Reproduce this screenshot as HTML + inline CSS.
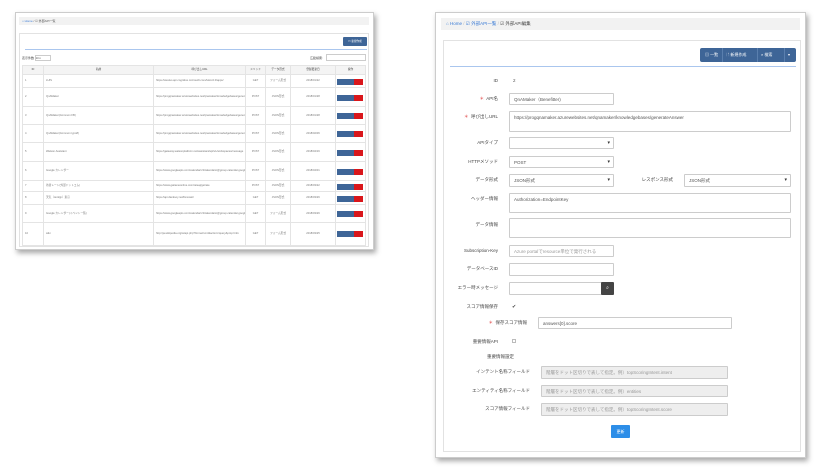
<!DOCTYPE html>
<html><head><meta charset="utf-8"><style>
*{box-sizing:border-box;margin:0;padding:0}
body{width:819px;height:474px;background:#fff;position:relative;overflow:hidden;font-family:"Liberation Sans","Noto Sans CJK JP",sans-serif;color:#555}
.a{position:absolute}
.panel{background:#fff;border:1px solid #ccc;box-shadow:2px 3px 5px rgba(0,0,0,.35)}
.crumb{background:#f2f2f2}
.card{background:#fff;border:1px solid #e2e2e2}
.inp{position:absolute;border:1px solid #ccc;background:#fff;border-radius:1px;font-size:4.5px;color:#555;padding:3px 4px;white-space:nowrap;overflow:hidden}
.lbl{position:absolute;font-size:4.5px;color:#444;text-align:right;white-space:nowrap}
.dis{background:#eee;color:#999}
.sel::after{content:"▾";position:absolute;right:3px;top:2px;font-size:5px;color:#333}
.star{color:#d33}
.row{position:absolute;left:22px;width:344px;border-bottom:1px solid #e4e4e4;font-size:2.7px;color:#777}
.row>div{position:absolute;top:0;height:100%;border-left:1px solid #e4e4e4;display:flex;align-items:center;padding:0 2px;overflow:hidden;line-height:3.6px}
.row>div.c{justify-content:center;text-align:center}
.hd{background:#f4f4f4;color:#444}
.bts{position:absolute;left:337px;width:26px;height:6px;display:flex}
.bts i{flex:1;background:#3e6597}
.bts i.r{background:#d9161b}
</style></head><body>

<!-- LEFT PANEL -->
<div class="a panel" style="left:15px;top:12px;width:359px;height:238px"></div>
<div class="a crumb" style="left:19px;top:17px;width:350px;height:8px;font-size:3px;line-height:8px;padding-left:3px"><span style="color:#3a7bd5">⌂ Home</span> / ☑ 外部API一覧</div>
<div class="a card" style="left:19px;top:33px;width:350px;height:214px"></div>
<div class="a" style="left:343px;top:37px;width:24px;height:9px;background:#3e6597;border-radius:1px;font-size:2.6px;color:#fff;line-height:9px;text-align:center">☐ 新規作成</div>
<div class="a" style="left:25px;top:49px;width:342px;height:1px;background:#aac6ee"></div>
<div class="a" style="left:22px;top:55px;font-size:3px;color:#444;line-height:7px">表示件数 <span style="display:inline-block;border:1px solid #ccc;width:16px;height:6px;vertical-align:middle;font-size:2.5px;line-height:5px">10 ▾</span></div>
<div class="a" style="left:310px;top:56px;font-size:3px;color:#444">広範検索:</div>
<div class="a" style="left:326px;top:54px;width:40px;height:7px;border:1px solid #ccc"></div>

<div class="row hd" style="top:65px;height:10px;border-top:1px solid #e4e4e4"><div class="c" style="left:0;width:21px">ID</div><div class="c" style="left:21px;width:110px">名前</div><div class="c" style="left:131px;width:92px">呼び出しURL</div><div class="c" style="left:223px;width:20px">メソッド</div><div class="c" style="left:243px;width:25px">データ形式</div><div class="c" style="left:268px;width:45px">登録更新日</div><div class="c" style="left:313px;width:31px;border-right:1px solid #e4e4e4">操作</div></div>

<div class="row" style="top:75px;height:13px"><div style="left:0;width:21px">1</div><div style="left:21px;width:110px">LUIS</div><div style="left:131px;width:92px">https://westus.api.cognitive.microsoft.com/luis/v2.0/apps/</div><div class="c" style="left:223px;width:20px">GET</div><div class="c" style="left:243px;width:25px">フォーム形式</div><div class="c" style="left:268px;width:45px">2018/01/22</div><div style="left:313px;width:31px;border-right:1px solid #e4e4e4"></div></div>
<div class="row" style="top:88px;height:19px"><div style="left:0;width:21px">2</div><div style="left:21px;width:110px">QnAMaker</div><div style="left:131px;width:92px">https://progqnamaker.azurewebsites.net/qnamaker/knowledgebases/generateAnswer</div><div class="c" style="left:223px;width:20px">POST</div><div class="c" style="left:243px;width:25px">JSON形式</div><div class="c" style="left:268px;width:45px">2018/01/28</div><div style="left:313px;width:31px;border-right:1px solid #e4e4e4"></div></div>
<div class="row" style="top:107px;height:18px"><div style="left:0;width:21px">3</div><div style="left:21px;width:110px">QnAMaker(Common FB)</div><div style="left:131px;width:92px">https://progqnamaker.azurewebsites.net/qnamaker/knowledgebases/generateAnswer</div><div class="c" style="left:223px;width:20px">POST</div><div class="c" style="left:243px;width:25px">JSON形式</div><div class="c" style="left:268px;width:45px">2018/01/28</div><div style="left:313px;width:31px;border-right:1px solid #e4e4e4"></div></div>
<div class="row" style="top:125px;height:18px"><div style="left:0;width:21px">4</div><div style="left:21px;width:110px">QnAMaker(Common typo8)</div><div style="left:131px;width:92px">https://progqnamaker.azurewebsites.net/qnamaker/knowledgebases/generateAnswer</div><div class="c" style="left:223px;width:20px">POST</div><div class="c" style="left:243px;width:25px">JSON形式</div><div class="c" style="left:268px;width:45px">2018/02/06</div><div style="left:313px;width:31px;border-right:1px solid #e4e4e4"></div></div>
<div class="row" style="top:143px;height:19px"><div style="left:0;width:21px">5</div><div style="left:21px;width:110px">Watson Assistant</div><div style="left:131px;width:92px">https://gateway.watsonplatform.net/assistant/api/v1/workspaces/message</div><div class="c" style="left:223px;width:20px">POST</div><div class="c" style="left:243px;width:25px">JSON形式</div><div class="c" style="left:268px;width:45px">2018/04/16</div><div style="left:313px;width:31px;border-right:1px solid #e4e4e4"></div></div>
<div class="row" style="top:162px;height:19px"><div style="left:0;width:21px">6</div><div style="left:21px;width:110px">Google カレンダー</div><div style="left:131px;width:92px">https://www.googleapis.com/calendar/v3/calendars/@group.calendar.google.com/events</div><div class="c" style="left:223px;width:20px">POST</div><div class="c" style="left:243px;width:25px">JSON形式</div><div class="c" style="left:268px;width:45px">2018/04/01</div><div style="left:313px;width:31px;border-right:1px solid #e4e4e4"></div></div>
<div class="row" style="top:181px;height:11px"><div style="left:0;width:21px">7</div><div style="left:21px;width:110px">為替レート(外部ドットコム)</div><div style="left:131px;width:92px">https://www.gaitameonline.com/rateaj/getrate</div><div class="c" style="left:223px;width:20px">POST</div><div class="c" style="left:243px;width:25px">JSON形式</div><div class="c" style="left:268px;width:45px">2018/03/22</div><div style="left:313px;width:31px;border-right:1px solid #e4e4e4"></div></div>
<div class="row" style="top:192px;height:13px"><div style="left:0;width:21px">8</div><div style="left:21px;width:110px">天気（tenkijp）東京</div><div style="left:131px;width:92px">https://api.danksoy.net/forecast/</div><div class="c" style="left:223px;width:20px">GET</div><div class="c" style="left:243px;width:25px">JSON形式</div><div class="c" style="left:268px;width:45px">2018/03/26</div><div style="left:313px;width:31px;border-right:1px solid #e4e4e4"></div></div>
<div class="row" style="top:205px;height:18px"><div style="left:0;width:21px">9</div><div style="left:21px;width:110px">Google カレンダー(イベント一覧)</div><div style="left:131px;width:92px">https://www.googleapis.com/calendar/v3/calendars/@group.calendar.google.com/events</div><div class="c" style="left:223px;width:20px">GET</div><div class="c" style="left:243px;width:25px">フォーム形式</div><div class="c" style="left:268px;width:45px">2018/03/26</div><div style="left:313px;width:31px;border-right:1px solid #e4e4e4"></div></div>
<div class="row" style="top:223px;height:23px"><div style="left:0;width:21px">10</div><div style="left:21px;width:110px">wiki</div><div style="left:131px;width:92px">http://ja.wikipedia.org/w/api.php?format=xml&amp;action=query&amp;prop=info</div><div class="c" style="left:223px;width:20px">GET</div><div class="c" style="left:243px;width:25px">フォーム形式</div><div class="c" style="left:268px;width:45px">2018/03/25</div><div style="left:313px;width:31px;border-right:1px solid #e4e4e4"></div></div>

<div class="bts" style="top:79px"><i></i><i></i><i class="r"></i></div>
<div class="bts" style="top:95px"><i></i><i></i><i class="r"></i></div>
<div class="bts" style="top:113px"><i></i><i></i><i class="r"></i></div>
<div class="bts" style="top:131px"><i></i><i></i><i class="r"></i></div>
<div class="bts" style="top:150px"><i></i><i></i><i class="r"></i></div>
<div class="bts" style="top:169px"><i></i><i></i><i class="r"></i></div>
<div class="bts" style="top:184px"><i></i><i></i><i class="r"></i></div>
<div class="bts" style="top:196px"><i></i><i></i><i class="r"></i></div>
<div class="bts" style="top:211px"><i></i><i></i><i class="r"></i></div>
<div class="bts" style="top:231px"><i></i><i></i><i class="r"></i></div>

<!-- RIGHT PANEL -->
<div class="a panel" style="left:435px;top:12px;width:371px;height:446px"></div>
<div class="a crumb" style="left:441px;top:18px;width:359px;height:12px;font-size:4.5px;line-height:12px;padding-left:5px;color:#444"><span style="color:#3a7bd5">⌂ Home</span> <span style="color:#bbb">/</span> <span style="color:#3a7bd5">☑ 外部API一覧</span> <span style="color:#bbb">/</span> ☑ 外部API編集</div>
<div class="a card" style="left:443px;top:40px;width:358px;height:412px"></div>
<div class="a" style="left:700px;top:48px;width:96px;height:14px;background:#3e6597;border-radius:2px;font-size:4px;color:#fff;line-height:14px;white-space:nowrap">
<span style="position:absolute;left:5px">▤ 一覧</span><span style="position:absolute;left:26px">🗋 新規作成</span><span style="position:absolute;left:61px">⌕ 検索</span><span style="position:absolute;left:88px">▾</span>
<span style="position:absolute;left:22px;top:0;width:1px;height:14px;background:#5a7fae"></span><span style="position:absolute;left:57px;top:0;width:1px;height:14px;background:#5a7fae"></span><span style="position:absolute;left:84px;top:0;width:1px;height:14px;background:#5a7fae"></span></div>
<div class="a" style="left:450px;top:66px;width:346px;height:1px;background:#aac6ee"></div>

<div class="lbl" style="right:321px;top:78px">ID</div><div class="a" style="left:513px;top:78px;font-size:4.5px">2</div>
<div class="lbl" style="right:321px;top:96px"><span class="star">＊</span>&nbsp; API名</div><div class="inp" style="left:509px;top:93px;width:105px;height:12px">QnAMaker（Benefitter)</div>
<div class="lbl" style="right:321px;top:114px"><span class="star">＊</span>&nbsp; 呼び出しURL</div><div class="inp" style="left:509px;top:111px;width:282px;height:21px">https://progqnamaker.azurewebsites.net/qnamaker/knowledgebases/generateAnswer</div>
<div class="lbl" style="right:321px;top:140px">APIタイプ</div><div class="inp sel" style="left:509px;top:137px;width:105px;height:12px"></div>
<div class="lbl" style="right:321px;top:159px">HTTPメソッド</div><div class="inp sel" style="left:509px;top:156px;width:105px;height:12px">POST</div>
<div class="lbl" style="right:321px;top:177px">データ形式</div><div class="inp sel" style="left:509px;top:174px;width:105px;height:13px">JSON形式</div>
<div class="lbl" style="right:146px;top:177px">レスポンス形式</div><div class="inp sel" style="left:684px;top:174px;width:107px;height:13px">JSON形式</div>
<div class="lbl" style="right:321px;top:196px">ヘッダー情報</div><div class="inp" style="left:509px;top:193px;width:282px;height:20px">Authorization=EndpointKey</div>
<div class="lbl" style="right:321px;top:222px">データ情報</div><div class="inp" style="left:509px;top:218px;width:282px;height:20px"></div>
<div class="lbl" style="right:321px;top:248px">Subscription-Key</div><div class="inp" style="left:509px;top:245px;width:105px;height:12px;color:#999">Azure portalでresource単位で発行される</div>
<div class="lbl" style="right:321px;top:266px">データベースID</div><div class="inp" style="left:509px;top:263px;width:105px;height:13px"></div>
<div class="lbl" style="right:321px;top:285px">エラー時メッセージ</div><div class="inp" style="left:509px;top:282px;width:93px;height:13px"></div>
<div class="a" style="left:601px;top:282px;width:13px;height:13px;background:#444;border-radius:1px;color:#fff;font-size:5px;text-align:center;line-height:13px">⌕</div>
<div class="lbl" style="right:321px;top:304px">スコア情報保存</div><div class="a" style="left:512px;top:304px;font-size:5px;color:#444">✔</div>
<div class="lbl" style="right:292px;top:320px"><span class="star">＊</span>&nbsp; 保存スコア情報</div><div class="inp" style="left:538px;top:317px;width:194px;height:12px">answers[0].score</div>
<div class="lbl" style="right:321px;top:339px">重要情報API</div><div class="a" style="left:512px;top:339px;width:4px;height:4px;border:1px solid #bbb"></div>
<div class="lbl" style="left:487px;top:354px">重要情報設定</div>
<div class="lbl" style="right:289px;top:369px">インテント名称フィールド</div><div class="inp dis" style="left:541px;top:366px;width:187px;height:13px">階層をドット区切りで表して指定。例）topScoringIntent.intent</div>
<div class="lbl" style="right:289px;top:388px">エンティティ名称フィールド</div><div class="inp dis" style="left:541px;top:385px;width:187px;height:12px">階層をドット区切りで表して指定。例）entities</div>
<div class="lbl" style="right:289px;top:406px">スコア情報フィールド</div><div class="inp dis" style="left:541px;top:403px;width:187px;height:13px">階層をドット区切りで表して指定。例）topScoringIntent.score</div>
<div class="a" style="left:611px;top:425px;width:19px;height:13px;background:#2d8ee8;border-radius:1px;color:#fff;font-size:4px;text-align:center;line-height:13px">更新</div>
</body></html>
